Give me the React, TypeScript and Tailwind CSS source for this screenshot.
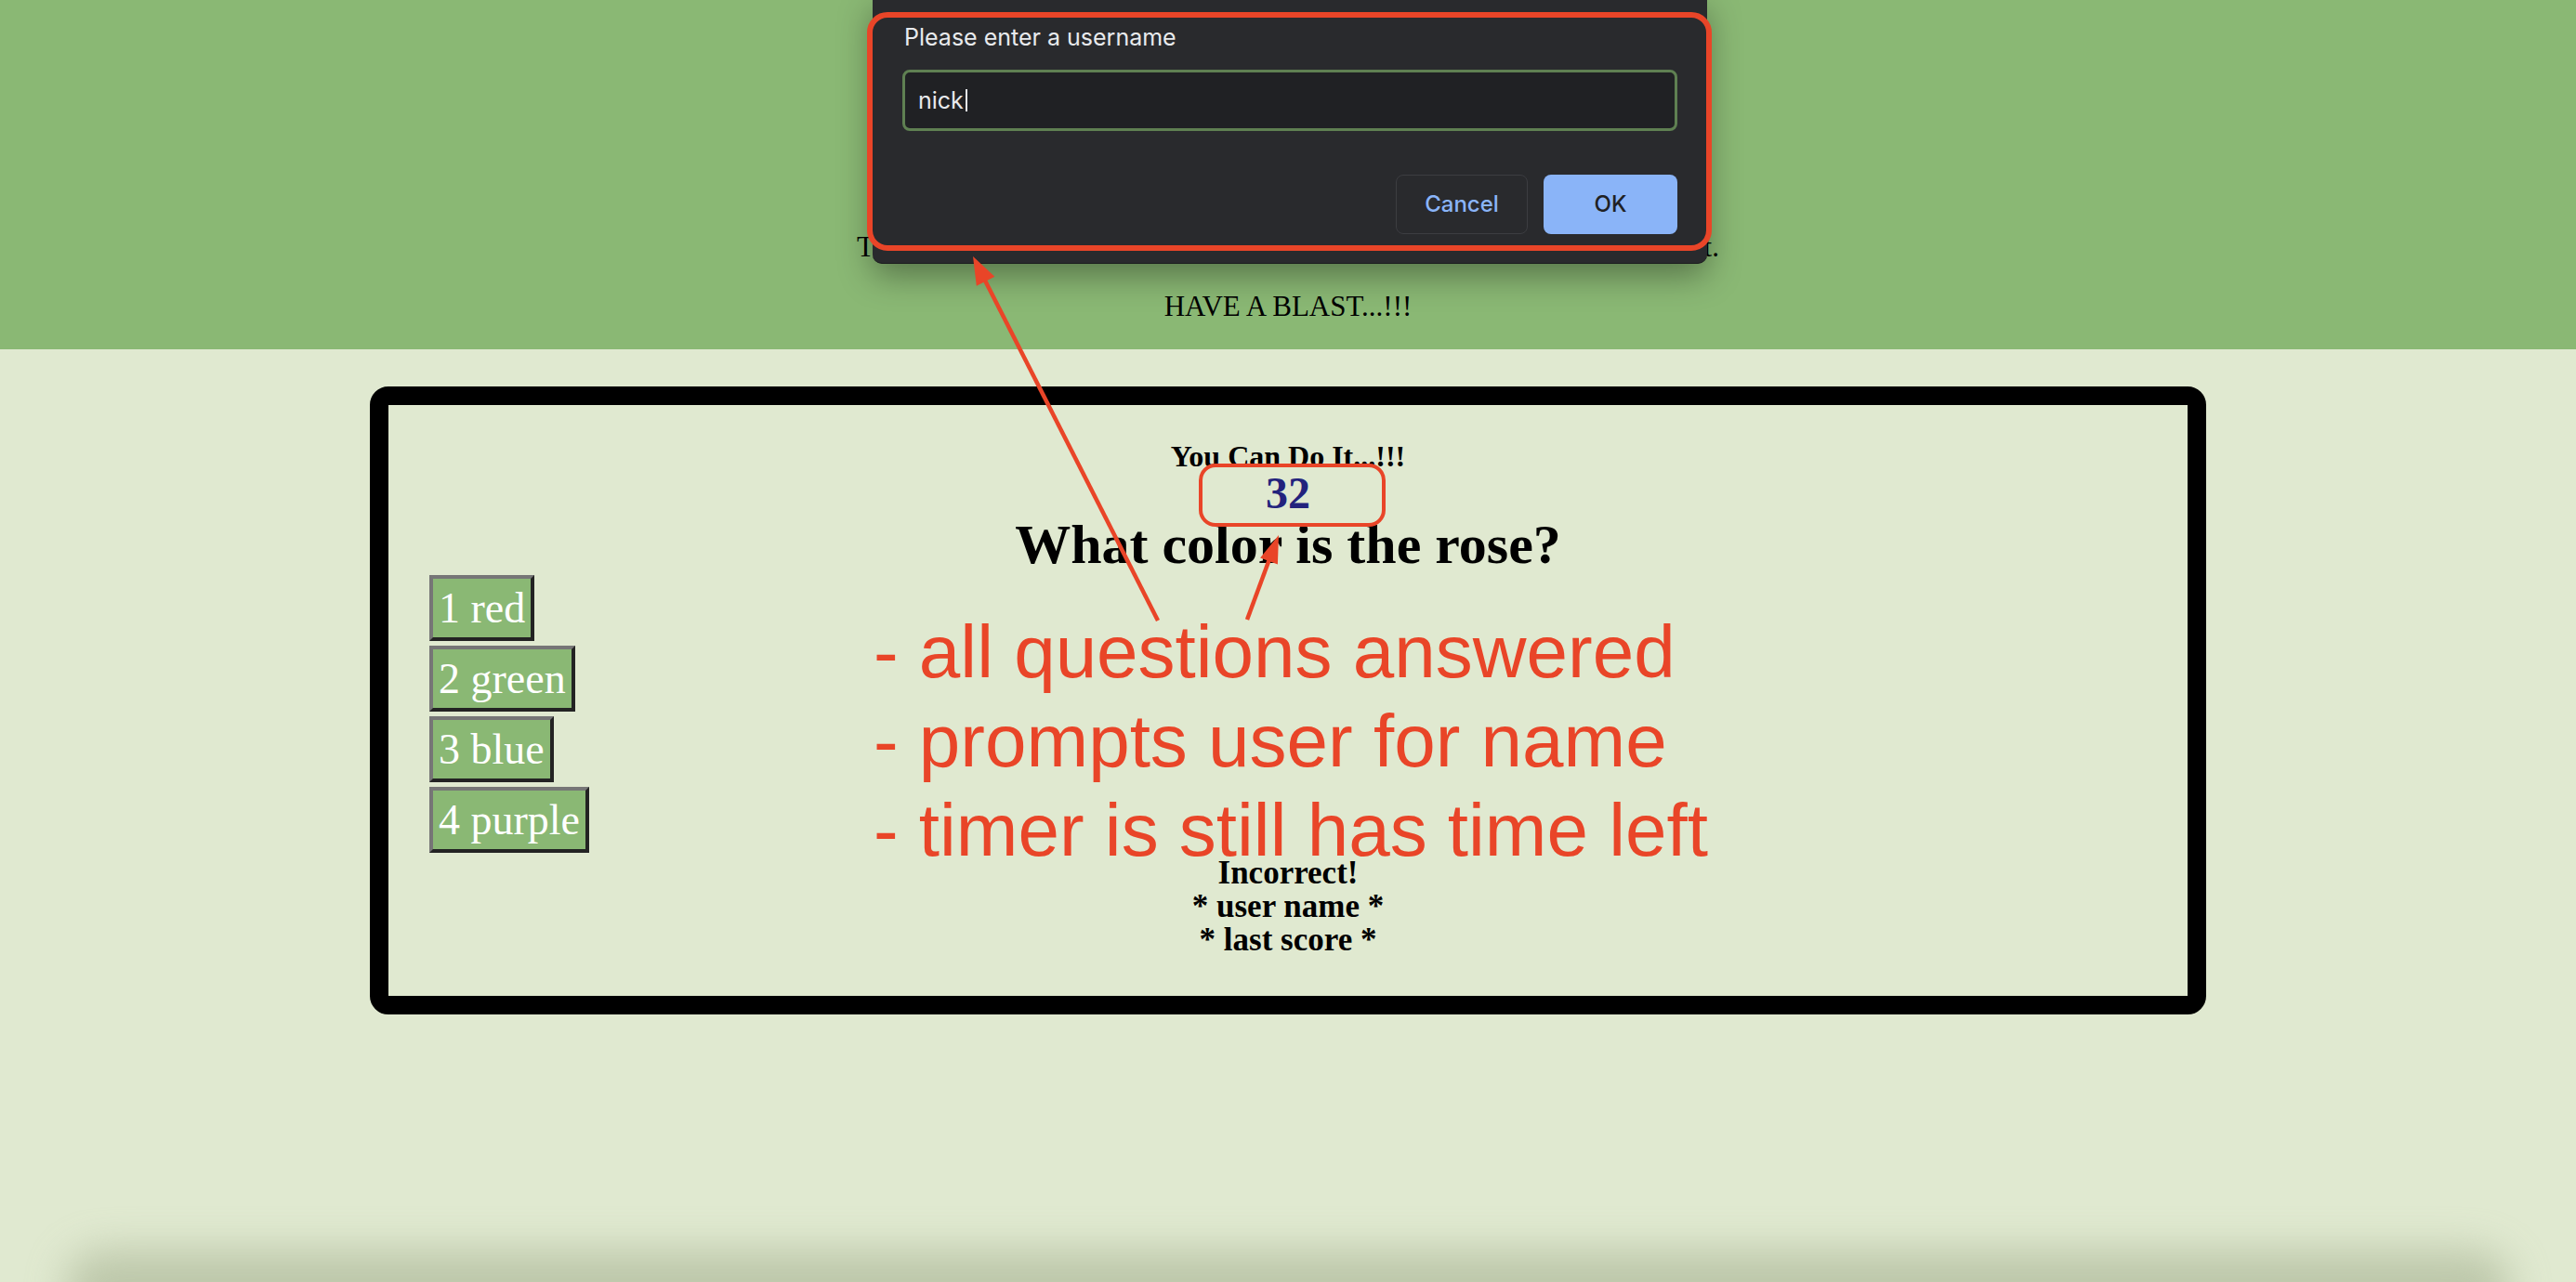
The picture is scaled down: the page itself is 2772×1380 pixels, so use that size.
const answers = ["1 red", "2 green", "3 blue", "4 purple"]

const notes = [
  "- all questions answered",
  "- prompts user for name",
  "- timer is still has time left",
]

function PromptDialog() {
  return (
    <div className="absolute left-[939px] top-0 h-[284px] w-[898px] rounded-b-[10px] border-b border-[#1b1c1e] bg-[#292a2d] font-['Inter',sans-serif] text-[#e8eaed] shadow-[0_12px_36px_rgba(0,0,0,0.38)]">
      <div className="flex flex-col px-[32px] pt-[28px]">
        <p className="pl-[2px] text-[25px] leading-none">Please enter a username</p>
        <div className="mt-[22px] flex h-[66px] items-center rounded-[8px] border-[3px] border-[#5f8052] bg-[#202124] pl-[14px]">
          <span className="text-[25px] leading-none">nick</span>
          <span className="ml-[2px] inline-block h-[24px] w-[2px] bg-[#e8eaed]" />
        </div>
        <div className="mt-[47px] flex justify-end gap-[17px]">
          <button
            type="button"
            className="h-[64px] w-[142px] rounded-[8px] border border-[#3c3d41] text-[24px] font-medium text-[#8ab4f8]"
          >
            Cancel
          </button>
          <button
            type="button"
            className="h-[64px] w-[144px] rounded-[8px] bg-[#8ab4f8] text-[24px] font-medium text-[#202124]"
          >
            OK
          </button>
        </div>
      </div>
    </div>
  )
}

function Annotations() {
  return (
    <>
      <div className="pointer-events-none absolute left-[933px] top-[13px] h-[257px] w-[909px] rounded-[22px] border-[6px] border-[#e94528]" />
      <div className="pointer-events-none absolute left-[1290px] top-[499px] h-[68px] w-[201px] rounded-[18px] border-[4px] border-[#e94528]" />

      <svg className="pointer-events-none absolute left-0 top-0" width="2772" height="1380" viewBox="0 0 2772 1380">
        <line x1="1246" y1="668" x2="1058" y2="298" stroke="#e94528" strokeWidth="4.5" />
        <polygon points="1047,276 1070.4,297.8 1050.8,307.7" fill="#e94528" />
        <line x1="1342" y1="667" x2="1366" y2="602" stroke="#e94528" strokeWidth="4.5" />
        <polygon points="1376,576 1374.9,607.6 1356.1,600.6" fill="#e94528" />
      </svg>

      <div className="pointer-events-none absolute left-[940px] top-[654px] flex flex-col font-['Liberation_Sans',Arial,sans-serif] text-[80px] leading-[96px] text-[#e94528]">
        {notes.map((line) => (
          <span key={line} className="whitespace-nowrap">
            {line}
          </span>
        ))}
      </div>
    </>
  )
}

export default function App() {
  return (
    <div className="relative h-[1380px] overflow-hidden bg-[#e0e9d0] font-['Liberation_Serif',serif] text-black">
      <header className="flex h-[376px] flex-col items-center bg-[#8ab874] pt-[250px]">
        <p className="w-[928px] text-[31px] leading-none [text-align-last:justify]">
          Try to answer every question before the timer runs out.
        </p>
        <p className="mt-[33px] text-[31px] leading-none">HAVE A BLAST...!!!</p>
      </header>

      <main className="pt-[40px]">
        <section className="mx-auto flex h-[676px] w-[1976px] flex-col rounded-[20px] border-[20px] border-black pt-[39px]">
          <div className="flex flex-col items-center">
            <h3 className="text-[32px] font-bold leading-none">You Can Do It...!!!</h3>
            <div className="text-[48px] font-bold leading-none text-[#23237d]">32</div>
            <h1 className="mt-[1px] text-[60px] font-bold leading-none">What color is the rose?</h1>
          </div>

          <div className="ml-[44px] mt-[3px] flex flex-col items-start gap-[5px]">
            {answers.map((answer) => (
              <button
                key={answer}
                type="button"
                className="h-[71px] border-[4px] border-b-[#232323] border-l-[#767676] border-r-[#232323] border-t-[#767676] bg-[#8ab874] px-[6px] py-[4px] text-[46px] leading-[55px] text-white"
              >
                {answer}
              </button>
            ))}
          </div>

          <div className="mt-[4px] flex flex-col items-center text-[35px] font-bold leading-[36px]">
            <span>Incorrect!</span>
            <span>* user name *</span>
            <span>* last score *</span>
          </div>
        </section>
      </main>

      <PromptDialog />
      <Annotations />

      <div className="pointer-events-none absolute bottom-[-46px] left-[70px] right-[70px] h-[80px] rounded-[40px] bg-[#aeb99a] opacity-70 blur-[22px]" />
    </div>
  )
}
